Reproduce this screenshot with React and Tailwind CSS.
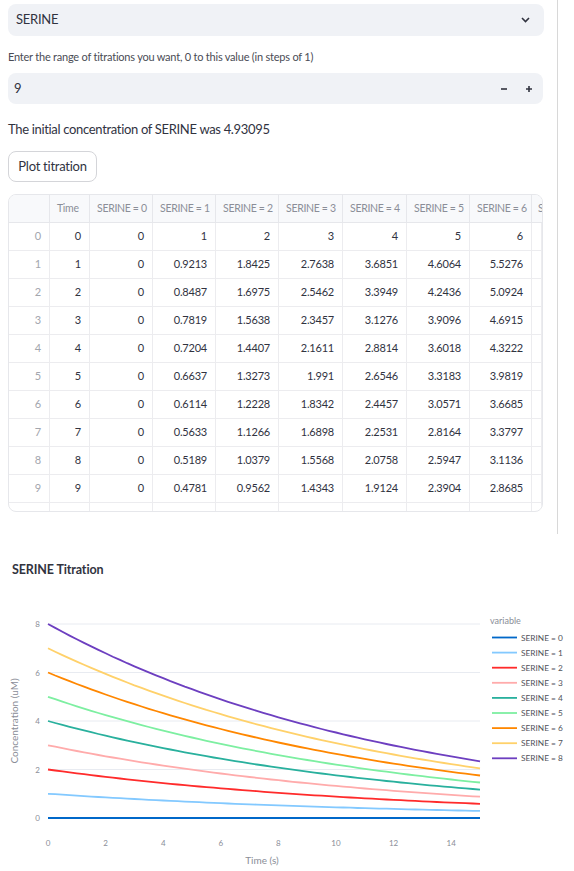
import { useMemo } from 'react';

const TEXT = 'text-[#31333f]';
const K = 0.08197;
const COLORS = ['#0068c9', '#83c9ff', '#ff2b2b', '#ffabab', '#29b09d', '#7defa1', '#ff8700', '#ffd16a', '#6d3fc0'];

// column widths of the data grid
const COLS = [41, 40, 63, 63, 63, 64, 64, 63, 62];
const HEADERS = ['', 'Time', 'SERINE = 0', 'SERINE = 1', 'SERINE = 2', 'SERINE = 3', 'SERINE = 4', 'SERINE = 5', 'SERINE = 6'];

const ROWS = [
  ['0', '0', '0', '1', '2', '3', '4', '5', '6'],
  ['1', '1', '0', '0.9213', '1.8425', '2.7638', '3.6851', '4.6064', '5.5276'],
  ['2', '2', '0', '0.8487', '1.6975', '2.5462', '3.3949', '4.2436', '5.0924'],
  ['3', '3', '0', '0.7819', '1.5638', '2.3457', '3.1276', '3.9096', '4.6915'],
  ['4', '4', '0', '0.7204', '1.4407', '2.1611', '2.8814', '3.6018', '4.3222'],
  ['5', '5', '0', '0.6637', '1.3273', '1.991', '2.6546', '3.3183', '3.9819'],
  ['6', '6', '0', '0.6114', '1.2228', '1.8342', '2.4457', '3.0571', '3.6685'],
  ['7', '7', '0', '0.5633', '1.1266', '1.6898', '2.2531', '2.8164', '3.3797'],
  ['8', '8', '0', '0.5189', '1.0379', '1.5568', '2.0758', '2.5947', '3.1136'],
  ['9', '9', '0', '0.4781', '0.9562', '1.4343', '1.9124', '2.3904', '2.8685'],
];

const px = (t) => 48 + t * 28.8;
const py = (v) => 818 - v * 24.25;

function DataGrid() {
  return (
    <div className="mt-[12px] w-[535px] h-[318px] border border-[#e6e7eb] rounded-lg overflow-hidden flex flex-col">
      <div className="flex h-[28px] bg-[#f8f9fb] border-b border-[#e6e7eb] shrink-0">
        {HEADERS.map((h, i) => (
          <div
            key={i}
            className="shrink-0 border-r border-[#e6e7eb] flex items-center px-[7px] text-[10.5px] tracking-[-0.03em] text-[#8b8e98] whitespace-nowrap overflow-hidden"
            style={{ width: COLS[i] }}
          >
            {h}
          </div>
        ))}
        <div className="flex-1 flex items-center px-[6px] text-[10.5px] text-[#8b8e98] overflow-hidden border-r border-[#e6e7eb]">S</div>
      </div>
      {ROWS.map((r, ri) => (
        <div key={ri} className="flex h-[28px] border-b border-[#ececef] shrink-0">
          {r.map((c, ci) => (
            <div
              key={ci}
              className={
                'shrink-0 border-r border-[#ececef] flex items-center justify-end px-[8px] text-[11px] tracking-[-0.02em] ' +
                (ci === 0 ? 'text-[#a3a6ae]' : 'text-[#31333f]')
              }
              style={{ width: COLS[ci] }}
            >
              {c}
            </div>
          ))}
          <div className="flex-1 border-r border-[#ececef]" />
        </div>
      ))}
      <div className="flex flex-1">
        {COLS.map((w, i) => (
          <div key={i} className="shrink-0 border-r border-[#ececef]" style={{ width: w }} />
        ))}
        <div className="flex-1 border-r border-[#ececef]" />
      </div>
    </div>
  );
}

function Chart() {
  const lines = useMemo(
    () =>
      COLORS.map((c, n) => {
        const pts = [];
        for (let t = 0; t <= 15.001; t += 0.25) pts.push(`${px(t).toFixed(1)},${py(n * Math.exp(-K * t)).toFixed(1)}`);
        return { c, d: 'M' + pts.join(' L') };
      }),
    []
  );

  return (
    <svg className="block" width="574" height="290" viewBox="0 581 574 290" fontFamily="Lato, 'Open Sans', sans-serif">
      {[2, 4, 6, 8].map((v) => (
        <line key={v} x1="48" x2="480" y1={py(v)} y2={py(v)} stroke="#e8ebf1" strokeWidth="1" />
      ))}
      {[0, 2, 4, 6, 8].map((v) => (
        <text key={v} x="40" y={py(v) + 3} textAnchor="end" fontSize="8" fill="#8a8d97">
          {v}
        </text>
      ))}
      {[0, 2, 4, 6, 8, 10, 12, 14].map((v) => (
        <text key={v} x={px(v)} y="846" textAnchor="middle" fontSize="8" fill="#8a8d97">
          {v}
        </text>
      ))}
      <text x="262" y="864" textAnchor="middle" fontSize="10" fill="#8a8d97">
        Time (s)
      </text>
      <text x="18" y="721" textAnchor="middle" fontSize="10" fill="#8a8d97" transform="rotate(-90 18 721)">
        Concentration (uM)
      </text>
      {lines.map((l, i) => (
        <path key={i} d={l.d} fill="none" stroke={l.c} strokeWidth="1.8" />
      ))}
      <text x="490" y="624" fontSize="9" fill="#8a8d97">
        variable
      </text>
      {COLORS.map((c, i) => {
        const y = 637.5 + i * 15.1;
        return (
          <g key={i}>
            <line x1="492" x2="517" y1={y} y2={y} stroke={c} strokeWidth="1.8" />
            <text x="521" y={y + 3} fontSize="8.3" fill="#4f525a">
              SERINE = {i}
            </text>
          </g>
        );
      })}
    </svg>
  );
}

export default function App() {
  return (
    <div className={`w-[574px] h-[871px] overflow-hidden bg-white ${TEXT}`} style={{ fontFamily: "Lato, 'Open Sans', sans-serif" }}>
      <div className="w-[558px] border-r border-[#d8d8d8] pl-2 pr-[14px] pt-1 pb-[22px]">
        {/* select */}
        <div className="h-[32px] w-[536px] rounded-lg bg-[#f0f2f6] flex items-center justify-between pl-[8px] pr-[14px]">
          <span className="text-[13px] tracking-[-0.02em]">SERINE</span>
          <svg width="9" height="6" viewBox="0 0 9 6">
            <path d="M1 1 L4.5 4.5 L8 1" fill="none" stroke="#31333f" strokeWidth="1.6" />
          </svg>
        </div>

        <div className="mt-[14px] text-[11px] leading-[14px] tracking-[-0.02em] text-[#4a4c55]">
          Enter the range of titrations you want, 0 to this value (in steps of 1)
        </div>

        {/* number input */}
        <div className="mt-[9px] h-[31px] w-[535px] rounded-lg bg-[#f0f2f6] flex items-center justify-between pl-[6px] pr-[10px]">
          <span className="text-[13px]">9</span>
          <div className="flex items-center gap-[17px]">
            <svg width="8" height="8" viewBox="0 0 8 8">
              <path d="M1 4 H7" stroke="#31333f" strokeWidth="1.6" />
            </svg>
            <svg width="8" height="8" viewBox="0 0 8 8">
              <path d="M1 4 H7 M4 1 V7" stroke="#31333f" strokeWidth="1.6" />
            </svg>
          </div>
        </div>

        <div className="mt-[16px] text-[13px] leading-[18px] tracking-[-0.025em]">The initial concentration of SERINE was 4.93095</div>

        <button className="mt-[13px] h-[31px] w-[89px] rounded-lg border border-[#d4d5d9] bg-white text-[13px] tracking-[-0.02em] flex items-center justify-center">
          Plot titration
        </button>

        <DataGrid />
      </div>

      <div className="pl-[12px] pt-[28px] text-[12.5px] font-bold leading-[16px] tracking-[-0.01em]">SERINE Titration</div>
      <div className="mt-[3px]">
        <Chart />
      </div>
    </div>
  );
}
